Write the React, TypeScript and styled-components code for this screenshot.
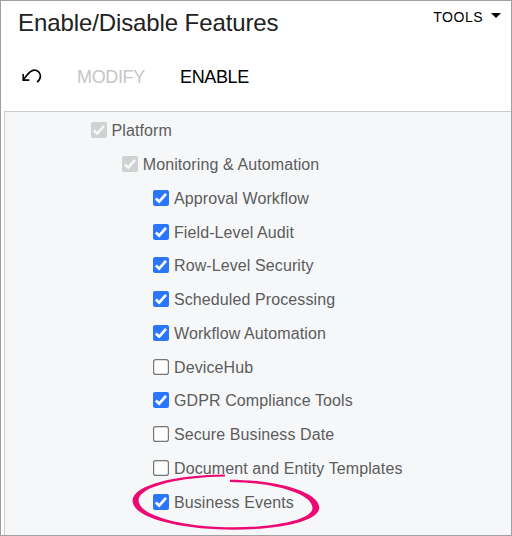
import React from "react";
import styled, { createGlobalStyle } from "styled-components";

const GlobalStyle = createGlobalStyle`
  * { box-sizing: border-box; }
  body { margin: 0; background: #fff; font-family: "Liberation Sans", Arial, sans-serif; }
`;

const Frame = styled.main`
  width: 512px;
  height: 536px;
  border: 1px solid #a0a0a0;
  display: flex;
  flex-direction: column;
  overflow: hidden;
  background: #fff;
`;

const Header = styled.header`
  height: 50px;
  display: flex;
  justify-content: space-between;
  padding: 9px 10px 0 17px;
`;

const Title = styled.h1`
  margin: 0;
  font-size: 24px;
  line-height: 26px;
  font-weight: 400;
  letter-spacing: -0.1px;
  color: #212121;
`;

const ToolsButton = styled.button`
  height: 14px;
  padding: 0;
  border: 0;
  background: none;
  display: flex;
  align-items: center;
  gap: 8px;
  font: 14px/14px "Liberation Sans", Arial, sans-serif;
  letter-spacing: 0.5px;
  color: #000;
`;

const Caret = styled.span`
  border: 5px solid transparent;
  border-top: 5px solid #000;
  border-bottom: 0;
  margin-top: -3px;
`;

const Toolbar = styled.nav`
  height: 60px;
  display: flex;
  align-items: flex-start;
  padding: 16px 0 0 20px;
`;

const ToolbarButton = styled.button<{ $width: number }>`
  width: ${(p) => p.$width}px;
  padding: 0;
  border: 0;
  background: none;
  text-align: left;
  white-space: nowrap;
  font: 18px/20px "Liberation Sans", Arial, sans-serif;
  letter-spacing: -0.35px;
  color: #000;
  &:disabled { color: #c6c6c6; }
  svg { display: block; }
`;

const Panel = styled.section`
  flex: 1;
  margin-left: 3px;
  border-top: 1px solid #cbcbd0;
  border-left: 1px solid #cbcbd0;
  background: #f5f7f9;
  padding-top: 2px;
`;

const Row = styled.label<{ $level: number }>`
  position: relative;
  height: 33.75px;
  padding-left: ${(p) => 85.5 + p.$level * 31.25}px;
  display: flex;
  align-items: center;
  gap: 5px;
  font-size: 16px;
  line-height: 18px;
  letter-spacing: 0.1px;
  white-space: nowrap;
  color: #5c5c5c;
`;

const Name = styled.span`
  padding-top: 1px;
`;

const Box = styled.svg`
  width: 16px;
  height: 16px;
  flex: none;
  margin-bottom: 1.2px;
`;

const Highlight = styled.svg`
  position: absolute;
  left: 125px;
  top: -14px;
  width: 194px;
  height: 60px;
  overflow: visible;
  pointer-events: none;
`;

type State = "locked" | "on" | "off";

const features: { name: string; level: number; state: State; marked?: boolean }[] = [
  { name: "Platform", level: 0, state: "locked" },
  { name: "Monitoring & Automation", level: 1, state: "locked" },
  { name: "Approval Workflow", level: 2, state: "on" },
  { name: "Field-Level Audit", level: 2, state: "on" },
  { name: "Row-Level Security", level: 2, state: "on" },
  { name: "Scheduled Processing", level: 2, state: "on" },
  { name: "Workflow Automation", level: 2, state: "on" },
  { name: "DeviceHub", level: 2, state: "off" },
  { name: "GDPR Compliance Tools", level: 2, state: "on" },
  { name: "Secure Business Date", level: 2, state: "off" },
  { name: "Document and Entity Templates", level: 2, state: "off" },
  { name: "Business Events", level: 2, state: "on", marked: true },
];

function Checkbox({ state }: { state: State }) {
  if (state === "off") {
    return (
      <Box viewBox="0 0 16 16">
        <rect x="0.6" y="0.6" width="14.8" height="14.8" rx="2.2" fill="#fff" stroke="#767676" strokeWidth="1.2" />
      </Box>
    );
  }
  const locked = state === "locked";
  return (
    <Box viewBox="0 0 16 16">
      <rect width="16" height="16" rx="2" fill={locked ? "#d0d2d2" : "#2b76ff"} />
      <path d="M2.8 8.4 6.2 11.6 13 3.8" fill="none" stroke={locked ? "#f5f6f7" : "#fff"} strokeWidth="2.7" />
    </Box>
  );
}

export default function App() {
  return (
    <>
      <GlobalStyle />
      <Frame>
        <Header>
          <Title>Enable/Disable Features</Title>
          <ToolsButton>TOOLS<Caret /></ToolsButton>
        </Header>
        <Toolbar>
          <ToolbarButton $width={56} aria-label="Undo">
            <svg width="22" height="20" viewBox="0 0 22 20" fill="none" stroke="#000" strokeWidth="1.6">
              <path d="M2.3 12.8C6 8.5 8.5 3.1 13.2 3.1C16.7 3.1 19.4 5.7 19.4 8.9C19.4 11.6 17.7 13.9 16 15.2" />
              <path d="M2.2 7V13.1H8.3" />
            </svg>
          </ToolbarButton>
          <ToolbarButton $width={103} disabled>MODIFY</ToolbarButton>
          <ToolbarButton $width={80}>ENABLE</ToolbarButton>
        </Toolbar>
        <Panel>
          {features.map((f) => (
            <Row key={f.name} $level={f.level}>
              <Checkbox state={f.state} />
              <Name>{f.name}</Name>
              {f.marked && (
                <Highlight viewBox="130 471 194 60">
                  <path
                    fill="#ed0973"
                    d="M225 474.4C177 474.8 133 484.5 132.5 500.5C132.3 518 181 529.7 233 529.7C281 529.7 319.5 521 319.3 507.5C319 493 281 480 230 479.7L230 482C273 482.3 312.4 493.5 312.5 508C312.6 519.5 276 527.3 234 527.3C184 527.3 138.4 516 138.6 500.5C138.8 486 181 477 225 476.5Z"
                  />
                </Highlight>
              )}
            </Row>
          ))}
        </Panel>
      </Frame>
    </>
  );
}
